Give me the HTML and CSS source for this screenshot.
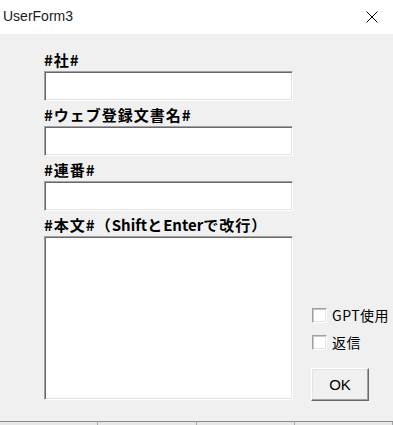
FILE: index.html
```html
<!DOCTYPE html>
<html lang="ja">
<head>
    <meta charset="UTF-8">
    <meta name="viewport" content="width=device-width, initial-scale=1.0">
    <title>UserForm3</title>
    <link rel="stylesheet" href="styles.css">
</head>
<body>
    <div class="ventana">
        <div class="barra-titulo">
            <span class="titulo">UserForm3</span>
            <svg class="cerrar" width="12" height="12" viewBox="0 0 12 12">
                <path d="M0.5 0.5 L11.5 11.5 M11.5 0.5 L0.5 11.5" stroke="#000" stroke-width="1" fill="none"/>
            </svg>
        </div>
        <div class="cliente">
            <div class="campos">
                <div class="etiqueta primera">#社#</div>
                <div class="caja"></div>
                <div class="etiqueta">#ウェブ登録文書名#</div>
                <div class="caja"></div>
                <div class="etiqueta">#連番#</div>
                <div class="caja"></div>
                <div class="etiqueta">#本文#（<span class="latin">Shift</span>と<span class="latin">Enter</span>で改行）</div>
                <div class="caja grande"></div>
            </div>
            <div class="lateral">
                <label class="opcion"><span class="casilla"></span>GPT使用</label>
                <label class="opcion"><span class="casilla"></span>返信</label>
                <div class="boton">OK</div>
            </div>
        </div>
        <div class="pie">
            <div class="celda"></div>
            <div class="celda"></div>
            <div class="celda"></div>
            <div class="celda"></div>
        </div>
    </div>
</body>
</html>
```

FILE: styles.css
```css
body {
    margin: 0;
    padding: 0;
    background-color: #f0f0f0;
    overflow: hidden;
}

.ventana {
    width: 393px;
    height: 425px;
    display: flex;
    flex-direction: column;
}

.barra-titulo {
    height: 34px;
    background-color: #fff;
    display: flex;
    align-items: center;
    justify-content: space-between;
    padding: 0 15px 0 3px;
}

.titulo {
    font-family: "Liberation Sans", Arial, sans-serif;
    font-size: 14px;
    color: #1a1a1a;
    margin-top: -1px;
}

.cliente {
    height: 388px;
    display: flex;
    padding-left: 44px;
    box-sizing: border-box;
}

.campos {
    width: 249px;
    padding-top: 15px;
    display: flex;
    flex-direction: column;
}

.etiqueta {
    height: 25px;
    display: flex;
    align-items: flex-end;
    padding-bottom: 3px;
    box-sizing: border-box;
    font-family: "Noto Sans CJK JP", sans-serif;
    font-weight: 700;
    font-size: 15px;
    line-height: 16px;
    letter-spacing: 1px;
    color: #000;
    white-space: nowrap;
}

.etiqueta.primera {
    height: 22px;
}

.latin {
    letter-spacing: 0;
}

.caja {
    height: 30px;
    background-color: #fff;
    border: 1px solid;
    border-color: #a0a0a0 #fff #fff #a0a0a0;
    box-shadow: inset 1px 1px 0 #696969, inset -1px -1px 0 #e3e3e3;
    box-sizing: border-box;
}

.caja.grande {
    height: 164px;
}

.lateral {
    margin-left: 18px;
    padding-top: 274px;
    display: flex;
    flex-direction: column;
    align-items: flex-start;
}

.opcion {
    display: flex;
    align-items: center;
    height: 15px;
    margin-bottom: 12px;
    font-family: "Noto Sans CJK JP", sans-serif;
    font-size: 14px;
    letter-spacing: 0.5px;
    color: #000;
    white-space: nowrap;
}

.casilla {
    width: 15px;
    height: 15px;
    margin-left: 1px;
    margin-right: 5px;
    background-color: #fff;
    border: 1px solid;
    border-color: #a0a0a0 #fff #fff #a0a0a0;
    box-shadow: inset 1px 1px 0 #c8c8c8, inset -1px -1px 0 #e3e3e3;
    box-sizing: border-box;
}

.boton {
    margin-top: 6px;
    width: 58px;
    height: 33px;
    display: flex;
    align-items: center;
    justify-content: center;
    background-color: #f0f0f0;
    border: 1px solid;
    border-color: #fff #696969 #696969 #fff;
    box-shadow: inset -1px -1px 0 #a0a0a0, inset 1px 1px 0 #e3e3e3;
    box-sizing: border-box;
    font-family: "Liberation Sans", Arial, sans-serif;
    font-size: 15px;
    color: #000;
}

.pie {
    height: 3px;
    border-top: 1px solid #8c8c8c;
    background-color: #e8e8e8;
    display: flex;
}

.celda {
    width: 101px;
    border-right: 1px solid #a8a8a8;
    box-sizing: border-box;
}
```
